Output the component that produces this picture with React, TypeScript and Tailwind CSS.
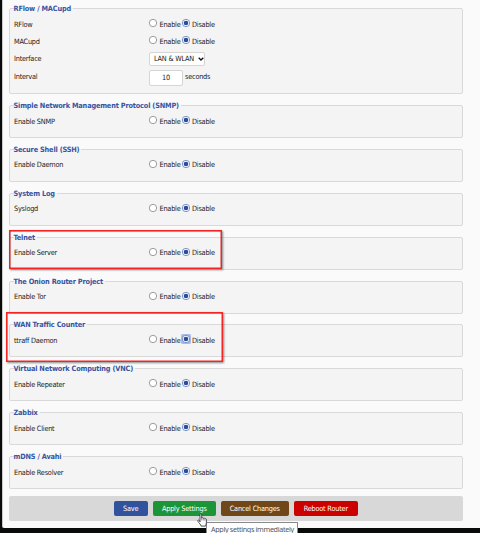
import React from 'react';

const FONT = "font-['DejaVu_Sans_Condensed','DejaVu_Sans',sans-serif]";

function Radio({ on = false, focus = false }: { on?: boolean; focus?: boolean }) {
  return (
    <svg className="-mt-[3px] h-[10px] w-[10px] shrink-0" viewBox="0 0 10 10">
      {focus && <rect x="0" y="0" width="10" height="10" rx="1.5" fill="#a9bbe6" />}
      <circle cx="5" cy="5" r="3.7" fill="#fff" stroke={on ? '#6079b8' : '#858585'} strokeWidth="0.8" />
      {on && <circle cx="5" cy="5" r="2.3" fill="#2b4c9b" />}
    </svg>
  );
}

function Choice({ focus = false }: { focus?: boolean }) {
  return (
    <div className="flex items-center">
      <Radio />
      <span className="ml-[1.5px] w-[21.5px]">Enable</span>
      <Radio on focus={focus} />
      <span className="ml-px">Disable</span>
    </div>
  );
}

function Row({ label, height, children }: { label: string; height: string; children: React.ReactNode }) {
  return (
    <div className={`flex items-center ${height}`}>
      <span className="w-[134px] shrink-0">{label}</span>
      {children}
    </div>
  );
}

function Group({ title, height, mark, children }: { title: string; height: string; mark?: React.ReactNode; children: React.ReactNode }) {
  return (
    <section className={`relative flex flex-col rounded-[2px] border border-[#d9d9d9] bg-[#f4f4f4] pl-[4.5px] ${height}`}>
      <h2 className="-ml-[0.5px] -mt-[5px] h-[10px] w-fit whitespace-nowrap bg-gradient-to-b from-[#fafafa] from-40% to-[#f4f4f4] to-40% pr-[2px] text-[7.3px] font-bold leading-[10px] tracking-[-0.17px] text-[#3855a2]">
        {title}
      </h2>
      {children}
      {mark}
    </section>
  );
}

const services = [
  { title: 'Simple Network Management Protocol (SNMP)', label: 'Enable SNMP' },
  { title: 'Secure Shell (SSH)', label: 'Enable Daemon' },
  { title: 'System Log', label: 'Syslogd' },
  { title: 'Telnet', label: 'Enable Server' },
  { title: 'The Onion Router Project', label: 'Enable Tor' },
  { title: 'WAN Traffic Counter', label: 'ttraff Daemon' },
  { title: 'Virtual Network Computing (VNC)', label: 'Enable Repeater' },
  { title: 'Zabbix', label: 'Enable Client' },
  { title: 'mDNS / Avahi', label: 'Enable Resolver' },
];

const redMark = 'pointer-events-none absolute z-10 border-[1.5px] border-[#f22424] shadow-[1px_1px_2px_rgba(0,0,0,0.45),inset_1px_1px_1px_rgba(0,0,0,0.12),inset_0_0_0_0.5px_#f22424]';

function Mark({ title }: { title: string }) {
  if (title === 'Telnet') return <div className={`${redMark} -left-px -top-[8px] h-[39px] w-[213px]`} />;
  if (title === 'WAN Traffic Counter') return <div className={`${redMark} -left-[4px] -top-[13px] h-[50px] w-[217px]`} />;
  return null;
}

export default function App() {
  return (
    <div className={`relative h-[533px] w-[480px] overflow-hidden bg-[#090b0b] pl-[2px] text-[7.3px] leading-[10px] tracking-[-0.23px] text-[#222] ${FONT}`}>
      <main className="h-[528px] rounded-bl-[2px] border-l border-[#c9c9c9] bg-[#fafafa] pl-[5.5px] pr-[17px] pt-[8px]">
        <Group title="RFlow / MACupd" height="h-[86px]">
          <Row label="RFlow" height="h-[21px]"><Choice /></Row>
          <Row label="MACupd" height="h-[13px]"><Choice /></Row>
          <Row label="Interface" height="h-[21px]">
            <div className="ml-[1px] flex h-[14px] w-[56px] items-center rounded-[2px] border border-[#d5d5d5] bg-white pl-[4px]">
              <span className="w-[43.5px] whitespace-nowrap">LAN &amp; WLAN</span>
              <svg className="h-[4px] w-[6px]" viewBox="0 0 6 4"><path d="M.7 .7 3 3 5.3 .7" fill="none" stroke="#111" strokeWidth="1.3" /></svg>
            </div>
          </Row>
          <Row label="Interval" height="h-[15px]">
            <div className="mt-[2px] ml-[1px] flex h-[16px] w-[34px] items-center justify-center rounded-[2px] border border-[#d5d5d5] bg-white">10</div>
            <span className="ml-[2px]">seconds</span>
          </Row>
        </Group>
        <div className="mt-[11px] flex flex-col gap-[10.9px]">
          {services.map((s) => (
            <Group key={s.title} title={s.title} height="h-[33px]" mark={<Mark title={s.title} />}>
              <Row label={s.label} height="h-[21px]"><Choice focus={s.label === 'ttraff Daemon'} /></Row>
            </Group>
          ))}
        </div>
        <footer className="mt-[7px] flex h-[25px] items-center justify-center gap-[5px] rounded-[2px] bg-[#d8d8d8] tracking-[-0.2px] text-white">
          <button className="h-[15px] w-[34px] rounded-[2px] bg-[#31529d] pt-px">Save</button>
          <button className="h-[15px] w-[63px] rounded-[2px] bg-[#1b9537] pt-px">Apply Settings</button>
          <button className="h-[15px] w-[68px] rounded-[2px] bg-[#704817] pt-px">Cancel Changes</button>
          <button className="h-[15px] w-[64px] rounded-[2px] bg-[#cd0000] pt-px">Reboot Router</button>
        </footer>
      </main>
      <div className="absolute left-[206px] top-[522px] h-[11px] w-[92px] whitespace-nowrap border border-b-0 border-[#8a8a8a] bg-white pl-[4px] font-['Noto_Sans',sans-serif] text-[7.2px] leading-[13px] tracking-[-0.33px] text-[#575757]">
        Apply settings immediately
      </div>
      <svg className="absolute left-[196px] top-[513px] h-[14px] w-[12px]" viewBox="0 0 12 14">
        <path d="M4 8.8V1.7c0-1.2 1.7-1.2 1.7 0V5c.6-.5 1.4-.3 1.6.3.6-.4 1.4-.2 1.6.4.7-.3 1.5 0 1.5.8v3.2c0 1.6-.8 2.2-.8 3.4H5.1C4.9 11.5 3 10.3 1.9 8.2c-.5-1 .7-1.7 1.3-.9z" fill="#fff" stroke="#252535" strokeWidth=".8" />
        <path d="M5.7 5v2.4M7.3 5.5v2M8.9 6v1.7" stroke="#252535" strokeWidth=".5" />
      </svg>
    </div>
  );
}
